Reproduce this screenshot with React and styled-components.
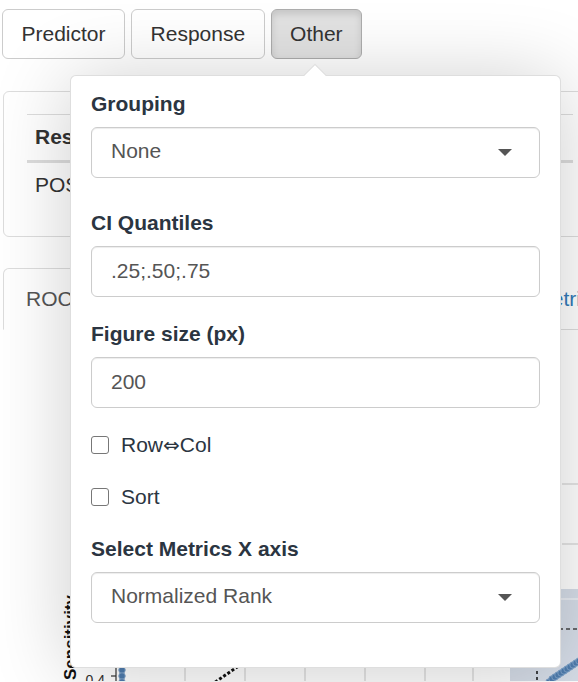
import React from "react";
import styled, { createGlobalStyle } from "styled-components";

const GlobalStyle = createGlobalStyle`
  html, body { margin: 0; padding: 0; background: #fff; overflow: hidden; }
  body {
    font-family: "Liberation Sans", Arial, sans-serif;
    font-size: 21px;
    color: #333;
  }
`;

const Page = styled.div`
  position: relative;
  width: 600px;
  height: 682px;
  overflow: hidden;
`;

const Toolbar = styled.div`
  display: flex;
  gap: 6px;
  padding: 9px 0 0 2px;
`;

const ToolButton = styled.button`
  height: 50px;
  padding: 0 18.5px;
  font-family: inherit;
  font-size: 21px;
  color: #333;
  background: ${(p) => (p.$active ? "#e2e2e2" : "#fff")};
  border: 1px solid ${(p) => (p.$active ? "#adadad" : "#ccc")};
  border-radius: 6px;
  box-shadow: ${(p) => (p.$active ? "inset 0 4px 7px rgba(0,0,0,.125)" : "none")};
`;

const Well = styled.section`
  margin: 32px 3px 0;
  height: 146px;
  box-sizing: border-box;
  border: 1px solid #ddd;
  border-radius: 6px;
  padding: 22px 23px 0;
`;

const TableRow = styled.div`
  display: flex;
  line-height: 30px;
  padding: ${(p) => (p.$head ? "7px 8px 8px" : "7px 8px")};
  font-weight: ${(p) => (p.$head ? 700 : 400)};
  border-top: ${(p) => (p.$head ? "1px solid #ddd" : "none")};
  border-bottom: ${(p) => (p.$head ? "3px solid #ddd" : "none")};
`;

const Cell = styled.div`
  width: 160px;
`;

const TabList = styled.nav`
  display: flex;
  margin: 31px 0 0 3px;
  border-bottom: 1px solid #ddd;
`;

const Tab = styled.div`
  margin-right: 3px;
  margin-bottom: -1px;
  padding: 15px 22px;
  line-height: 30px;
  white-space: nowrap;
  border: 1px solid ${(p) => (p.$active ? "#ddd" : "transparent")};
  border-bottom-color: transparent;
  border-radius: 6px 6px 0 0;
  background: ${(p) => (p.$active ? "#fff" : "transparent")};
  color: ${(p) => (p.$active ? "#555" : "#337ab7")};
  min-width: ${(p) => (p.$minWidth ? `${p.$minWidth}px` : "0")};
  box-sizing: border-box;
`;

const Plot = styled.svg`
  display: block;
  width: 600px;
  height: 351px;
`;

const Popover = styled.div`
  position: absolute;
  left: 70px;
  top: 75px;
  width: 491px;
  box-sizing: border-box;
  background: #fff;
  border: 1px solid rgba(0, 0, 0, 0.13);
  border-radius: 6px;
  padding: 13px 20px 44px;
  box-shadow: 0 5px 80px rgba(0, 0, 0, 0.2);
  z-index: 10;
`;

const Arrow = styled.span`
  position: absolute;
  top: -9px;
  left: 236px;
  width: 16px;
  height: 16px;
  background: #fff;
  border-top: 1px solid rgba(0, 0, 0, 0.13);
  border-left: 1px solid rgba(0, 0, 0, 0.13);
  box-sizing: border-box;
  transform: rotate(45deg);
`;

const Field = styled.div`
  margin-bottom: ${(p) => p.$gap}px;
`;

const FieldLabel = styled.label`
  display: block;
  font-weight: 700;
  line-height: 30px;
  margin-bottom: 8px;
  color: #2b3541;
`;

const SelectBox = styled.div`
  height: 51px;
  box-sizing: border-box;
  border: 1px solid #ccc;
  border-radius: 6px;
  display: flex;
  align-items: center;
  justify-content: space-between;
  padding: 0 27px 3px 19px;
  color: #555;
  background: #fff;
  box-shadow: inset 0 1px 1px rgba(0, 0, 0, 0.075);
`;

const Caret = styled.span`
  width: 0;
  height: 0;
  border-left: 7px solid transparent;
  border-right: 7px solid transparent;
  border-top: 7px solid #555;
  margin-top: 2px;
`;

const TextInput = styled.input`
  display: block;
  width: 100%;
  height: 51px;
  box-sizing: border-box;
  border: 1px solid #ccc;
  border-radius: 6px;
  padding: 0 19px 2px;
  font-family: inherit;
  font-size: 21px;
  color: #555;
  background: #fff;
  outline: none;
  box-shadow: inset 0 1px 1px rgba(0, 0, 0, 0.075);
`;

const CheckRow = styled.label`
  display: flex;
  align-items: center;
  gap: 12px;
  height: 30px;
  margin-bottom: 22px;
  color: #2b3541;
`;

const CheckBox = styled.input`
  appearance: none;
  margin: 0;
  width: 18px;
  height: 18px;
  box-sizing: border-box;
  border: 1.5px solid #777;
  border-radius: 3px;
  background: #fff;
`;

const Glyph = styled.span`
  font-family: "DejaVu Sans", sans-serif;
  font-size: 20px;
`;

function PlotArea() {
  const o = 331; // page y of svg top
  const Y = (y) => y - o;
  const gridX = [185, 245, 305, 365, 425, 473];
  const blue = [
    [549, 683], [552, 680], [555, 678], [558, 676], [561, 674], [564, 672],
    [567, 670], [570, 668], [573, 666], [576, 664], [579, 662], [583, 660],
  ];
  return (
    <Plot viewBox="0 0 600 351">
      {/* right facet */}
      <rect x="510" y={Y(590)} width="90" height="100" fill="#d6dde8" />
      <line x1="510" x2="600" y1={Y(600)} y2={Y(600)} stroke="#eef1f6" strokeWidth="1.5" />
      <line x1="510" x2="600" y1={Y(630)} y2={Y(630)} stroke="#444" strokeWidth="1.5" strokeDasharray="4 3" />
      <line x1="537" x2="537" y1={Y(666)} y2={Y(690)} stroke="#111" strokeWidth="1.5" strokeDasharray="3 3" />
      <line x1="562" x2="600" y1={Y(485)} y2={Y(485)} stroke="#ddd" strokeWidth="1.5" />
      <line x1="562" x2="600" y1={Y(545)} y2={Y(545)} stroke="#ddd" strokeWidth="1.5" />
      {blue.map(([x, y], i) => (
        <circle key={i} cx={x} cy={Y(y)} r="3.2" fill="#4f7cad" stroke="#7ea2c8" strokeWidth="1" />
      ))}

      {/* left panel grid */}
      {gridX.map((x) => (
        <line key={x} x1={x} x2={x} y1={Y(560)} y2={Y(700)} stroke="#dcdcdc" strokeWidth="1.5" />
      ))}
      <line x1="116" x2="116" y1={Y(560)} y2={Y(700)} stroke="#333" strokeWidth="1.2" />
      <line x1="111" x2="116" y1={Y(677)} y2={Y(677)} stroke="#333" strokeWidth="1.2" />
      <text x="105" y={Y(686)} textAnchor="end" fontSize="14" fill="#333" fontFamily="Liberation Sans, Arial, sans-serif">0.4</text>
      <text
        transform={`translate(76 ${Y(681)}) rotate(-90)`}
        fontSize="17"
        fontWeight="700"
        fill="#111"
        fontFamily="Liberation Sans, Arial, sans-serif"
      >
        Sensitivity
      </text>
      {[671, 677, 683].map((y) => (
        <circle key={y} cx="122" cy={Y(y)} r="3.2" fill="#4f7cad" stroke="#7ea2c8" strokeWidth="1" />
      ))}
      <line x1="211" x2="243" y1={Y(686)} y2={Y(664)} stroke="#111" strokeWidth="3" strokeDasharray="3 2" />
    </Plot>
  );
}

export default function App() {
  return (
    <>
      <GlobalStyle />
      <Page>
        <Toolbar>
          <ToolButton>Predictor</ToolButton>
          <ToolButton>Response</ToolButton>
          <ToolButton $active>Other</ToolButton>
        </Toolbar>

        <Well>
          <TableRow $head>
            <Cell>Response</Cell>
            <Cell>Predictor</Cell>
          </TableRow>
          <TableRow>
            <Cell>POS</Cell>
            <Cell>score</Cell>
          </TableRow>
        </Well>

        <TabList>
          <Tab $active>ROC</Tab>
          <Tab $minWidth={429}>Predictiveness</Tab>
          <Tab>Metrics</Tab>
        </TabList>

        <PlotArea />

        <Popover>
          <Arrow />
          <Field $gap={30}>
            <FieldLabel>Grouping</FieldLabel>
            <SelectBox>
              <span>None</span>
              <Caret />
            </SelectBox>
          </Field>
          <Field $gap={22}>
            <FieldLabel>CI Quantiles</FieldLabel>
            <TextInput readOnly value=".25;.50;.75" />
          </Field>
          <Field $gap={22}>
            <FieldLabel>Figure size (px)</FieldLabel>
            <TextInput readOnly value="200" />
          </Field>
          <CheckRow>
            <CheckBox type="checkbox" readOnly />
            <span>
              Row<Glyph>⇔</Glyph>Col
            </span>
          </CheckRow>
          <CheckRow>
            <CheckBox type="checkbox" readOnly />
            <span>Sort</span>
          </CheckRow>
          <Field $gap={0}>
            <FieldLabel>Select Metrics X axis</FieldLabel>
            <SelectBox>
              <span>Normalized Rank</span>
              <Caret />
            </SelectBox>
          </Field>
        </Popover>
      </Page>
    </>
  );
}
